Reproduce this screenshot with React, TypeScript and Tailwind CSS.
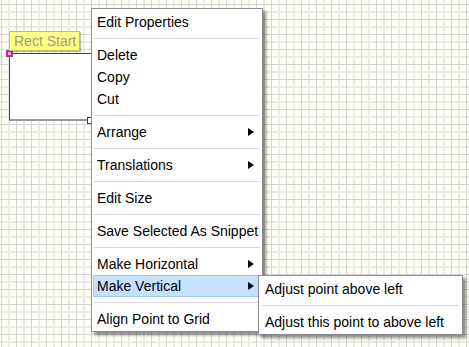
import React from 'react';

type Entry = { label: string; sub?: boolean; active?: boolean } | 'sep';

const mainMenu: Entry[] = [
  { label: 'Edit Properties' },
  'sep',
  { label: 'Delete' },
  { label: 'Copy' },
  { label: 'Cut' },
  'sep',
  { label: 'Arrange', sub: true },
  'sep',
  { label: 'Translations', sub: true },
  'sep',
  { label: 'Edit Size' },
  'sep',
  { label: 'Save Selected As Snippet' },
  'sep',
  { label: 'Make Horizontal', sub: true },
  { label: 'Make Vertical', sub: true, active: true },
  'sep',
  { label: 'Align Point to Grid' },
];

const subMenu: Entry[] = [
  { label: 'Adjust point above left' },
  'sep',
  { label: 'Adjust this point to above left' },
];

function Arrow() {
  return (
    <svg width="6" height="8" viewBox="0 0 6 8" className="shrink-0">
      <polygon points="0,0 6,4 0,8" fill="#000" />
    </svg>
  );
}

function MenuList({ items }: { items: Entry[] }) {
  return (
    <>
      {items.map((item, i) =>
        item === 'sep' ? (
          <div key={i} className="mx-[1px] my-[5px] h-px bg-[#d7d7d7]" />
        ) : (
          <div
            key={i}
            className={`flex h-[22px] items-center justify-between whitespace-nowrap pl-[3px] pr-[6px] ${
              item.active ? 'border border-[#99c9f5] bg-[#c4e0fc]' : 'border border-transparent'
            }`}
          >
            <span>{item.label}</span>
            {item.sub && <Arrow />}
          </div>
        )
      )}
    </>
  );
}

function Grid() {
  return (
    <svg className="absolute inset-0" width="469" height="347">
      <defs>
        <pattern id="g" width="15" height="15" patternUnits="userSpaceOnUse" x="1" y="4">
          <rect x="7" y="0" width="2" height="15" fill="#ebebe9" />
          <rect x="0" y="7" width="15" height="2" fill="#ebebe9" />
          <rect x="0" y="0" width="1" height="15" fill="#d6d4d8" />
          <rect x="0" y="0" width="15" height="1" fill="#d6d4d8" />
        </pattern>
      </defs>
      <rect width="469" height="347" fill="#fffff6" />
      <rect width="469" height="347" fill="url(#g)" />
    </svg>
  );
}

export default function App() {
  return (
    <div
      className="relative h-[347px] w-[469px] overflow-hidden text-[14px] text-black"
      style={{ fontFamily: '"Liberation Sans", Arial, sans-serif' }}
    >
      <Grid />

      {/* diagram node */}
      <div className="absolute left-[9px] top-[53px] h-[68px] w-[90px] border-l border-t border-b-2 border-l-[#444] border-t-[#444] border-b-[#999] bg-white" />
      <div className="absolute left-[87px] top-[117px] h-[7px] w-[7px] border border-[#2030e0] bg-white" />
      <div className="absolute left-[6px] top-[50px] h-[7px] w-[7px] border-2 border-[#9a3fa6] bg-[#f6a8bc]" />
      <div className="absolute left-[9px] top-[31px] flex h-[20px] w-[71px] items-center border border-[#c2c25a] bg-[#ffff82] pl-[4px] text-[#9c9c8c] shadow-[1px_1px_1px_rgba(0,0,0,0.25)]">
        Rect Start
      </div>

      {/* context menu */}
      <div className="absolute left-[91px] top-[8px] z-10 w-[172px] border border-[#8e8e8e] bg-white px-[1px] pb-[1px] pt-[2px] shadow-[3px_3px_3px_rgba(0,0,0,0.45)]">
        <MenuList items={mainMenu} />
      </div>

      {/* submenu */}
      <div className="absolute left-[258px] top-[275px] z-20 w-[205px] border border-[#8e8e8e] bg-white px-[2px] pb-[1px] pt-[2px] shadow-[3px_3px_3px_rgba(0,0,0,0.45)]">
        <MenuList items={subMenu} />
      </div>
    </div>
  );
}
